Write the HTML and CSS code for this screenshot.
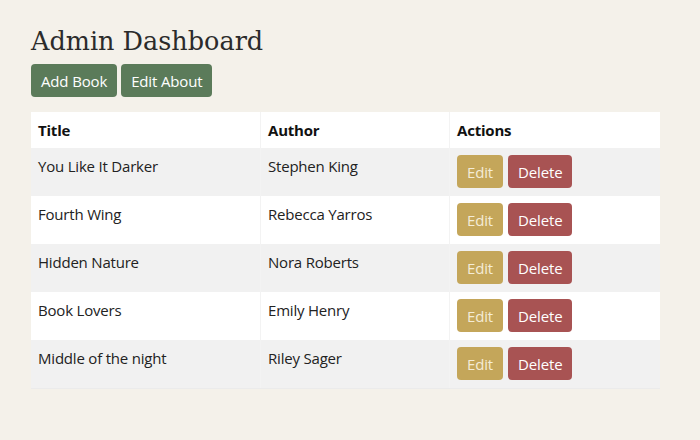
FILE: index.html
```html
<!DOCTYPE html>
<html>
<head>
<meta charset="utf-8">
<link rel="stylesheet" href="styles.css">
</head>
<body>
<main class="page">
  <h1 class="title">Admin Dashboard</h1>
  <div class="toolbar">
    <button class="btn btn-green">Add Book</button>
    <button class="btn btn-green">Edit About</button>
  </div>
  <table class="books">
    <thead>
      <tr><th class="c-title">Title</th><th class="c-author">Author</th><th class="c-actions">Actions</th></tr>
    </thead>
    <tbody>
      <tr><td>You Like It Darker</td><td>Stephen King</td><td><button class="btn btn-edit">Edit</button><button class="btn btn-delete">Delete</button></td></tr>
      <tr><td>Fourth Wing</td><td>Rebecca Yarros</td><td><button class="btn btn-edit">Edit</button><button class="btn btn-delete">Delete</button></td></tr>
      <tr><td>Hidden Nature</td><td>Nora Roberts</td><td><button class="btn btn-edit">Edit</button><button class="btn btn-delete">Delete</button></td></tr>
      <tr><td>Book Lovers</td><td>Emily Henry</td><td><button class="btn btn-edit">Edit</button><button class="btn btn-delete">Delete</button></td></tr>
      <tr><td>Middle of the night</td><td>Riley Sager</td><td><button class="btn btn-edit">Edit</button><button class="btn btn-delete">Delete</button></td></tr>
    </tbody>
  </table>
</main>
</body>
</html>
```
FILE: styles.css
```css
html, body {
  margin: 0;
  padding: 0;
  background: #f4f1ea;
}
body {
  font-family: "Open Sans", "Noto Sans", sans-serif;
  color: #222;
}
.page {
  padding: 24px 40px 20px 31px;
}
.title {
  font-family: "DejaVu Serif", "Liberation Serif", serif;
  font-weight: normal;
  font-size: 25.5px;
  line-height: 34px;
  margin: 0 0 6px 0;
  color: #2b2b2b;
}
.toolbar {
  display: flex;
  gap: 4px;
  margin-bottom: 15px;
}
.btn {
  font-family: "Open Sans", "Noto Sans", sans-serif;
  font-size: 15px;
  line-height: 20px;
  letter-spacing: -0.15px;
  border: none;
  border-radius: 4px;
  color: #fff;
  padding: 6px 10px;
  cursor: pointer;
}
.btn-green {
  background: #5b7b5a;
  height: 33px;
}
.books {
  width: 100%;
  border-collapse: collapse;
  font-size: 15px;
  line-height: 20px;
  letter-spacing: -0.2px;
}
.books th, .books td {
  text-align: left;
  vertical-align: top;
  padding: 8px 7px 8px 7px;
  border-left: 1px solid #f3f3f3;
}
.books td {
  padding: 7px 7px 8px 7px;
}
.books td:not(:last-child) {
  padding-top: 8px;
}
.books th:first-child, .books td:first-child {
  border-left: none;
}
.books th {
  background: #fff;
  font-weight: bold;
  color: #111;
}
.c-title { width: 215px; }
.c-author { width: 174px; }
.books tbody tr { height: 48px; }
.books tbody tr:nth-child(odd) td { background: #f1f1f1; }
.books tbody tr:nth-child(even) td { background: #fff; }
.books tbody tr:last-child td { border-bottom: 1px solid #ebebeb; }
.books td .btn {
  height: 33px;
  padding: 6px 10px;
  margin-right: 5px;
  vertical-align: top;
}
.btn-edit { background: #c4a65a; color: #f4ecd6; }
.btn-delete { background: #a85353; }
```
